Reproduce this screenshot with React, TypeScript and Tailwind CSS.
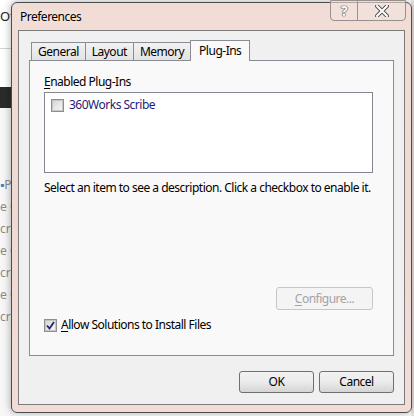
import React from 'react';

const ui = "font-['Segoe_UI','Noto_Sans','Open_Sans',sans-serif]";

function Check({ checked }: { checked?: boolean }) {
  return (
    <span className="flex h-[13px] w-[13px] shrink-0 items-center justify-center border border-[#8f8f8f] bg-white">
      <span className="flex h-[11px] w-[11px] items-center justify-center border border-[#c6c6c6] bg-gradient-to-br from-[#d8d8d8] to-[#f6f6f6]">
        {checked && (
          <svg width="9" height="9" viewBox="0 0 9 9">
            <path d="M1 4.5 L3.5 7.5 L8 1" fill="none" stroke="#23236e" strokeWidth="1.8" />
          </svg>
        )}
      </span>
    </span>
  );
}

function Tab({ label, active }: { label: string; active?: boolean }) {
  if (active) {
    return (
      <div className="relative z-10 -mb-px flex h-[21px] items-center border border-b-0 border-[#898c95] bg-[#f9f9f9] px-[8px] text-[12px] text-black">
        {label}
      </div>
    );
  }
  return (
    <div className="-mr-px flex h-[18px] items-center border border-b-0 border-[#898c95] bg-gradient-to-b from-[#f2f2f2] to-[#e3e3e3] px-[6px] text-[12px] text-black">
      {label}
    </div>
  );
}

function Button({ label, disabled, ul }: { label: string; disabled?: boolean; ul?: boolean }) {
  return (
    <div
      className={
        disabled
          ? 'flex h-[23px] items-center justify-center rounded-[3px] border border-[#c7c7c7] bg-[#f4f4f4] text-[12px] text-[#a3a3a3]'
          : 'flex h-[22px] items-center justify-center rounded-[3px] border border-[#707070] bg-gradient-to-b from-[#f2f2f2] via-[#ebebeb] to-[#d5d5d5] text-[12px] text-black'
      }
    >
      {ul ? (
        <span>
          <span className="underline underline-offset-2">{label[0]}</span>
          {label.slice(1)}
        </span>
      ) : (
        label
      )}
    </div>
  );
}

export default function App() {
  return (
    <div className={`relative h-[416px] w-[414px] overflow-hidden bg-white ${ui}`}>
      {/* window behind the dialog */}
      <div className="absolute left-0 top-0 h-[416px] w-[14px] whitespace-nowrap bg-[#f7f7f7]">
        <div className="h-[49px] border-b border-[#d4d4d4] bg-white pt-[8px] text-[13px] leading-[16px] text-[#222]">Of</div>
        <div className="h-[38px] bg-white" />
        <div className="h-[21px] bg-[#2b2b2b]" />
        <div className="flex flex-col pt-[66px] text-[12px] leading-[22px] text-[#8a8a8a]">
          <span>
            <span className="text-[#3a7fc0]">▪</span>P
          </span>
          <span>
            e <span className="text-[#6a7f99]">C</span>
          </span>
          <span>cri</span>
          <span>
            e <span className="text-[#6a7f99]">C</span>
          </span>
          <span>cri</span>
          <span>
            e <span className="text-[#6a7f99]">C</span>
          </span>
          <span>cri</span>
        </div>
      </div>
      <div className="absolute right-0 top-0 h-[416px] w-[3px] bg-[#efe6e4]" />

      {/* dialog */}
      <div className="absolute left-[11px] top-[2px] flex h-[411px] w-[401px] flex-col rounded-[6px] border border-[#4c4c4c] bg-gradient-to-b from-[#f1dcd6] via-[#efd9d3] to-[#f2dcd7] tracking-[-0.5px] shadow-[0_0_8px_rgba(0,0,0,0.35)]">
        {/* title bar */}
        <div className="relative flex h-[28px] items-center pl-[8px] text-[12px] text-black">
          <span className="[text-shadow:0_0_6px_#fff]">Preferences</span>
          <div className="absolute right-[5px] top-[-3px] flex">
            <div className="flex h-[21px] w-[28px] items-center justify-center rounded-bl-[4px] border border-[#9a8f8d] bg-[#f3e2dd]/60 text-[14px] font-bold text-white [text-shadow:0_0_1px_#444,0_0_1px_#444,0_0_1px_#444]">
              ?
            </div>
            <div className="-ml-px flex h-[21px] w-[49px] items-center justify-center rounded-br-[4px] border border-[#9a8f8d] bg-[#f3e2dd]/60">
              <svg width="14" height="12" viewBox="0 0 14 12">
                <path d="M2 1 L12 11 M12 1 L2 11" stroke="#555" strokeWidth="4" strokeLinecap="round" />
                <path d="M2 1 L12 11 M12 1 L2 11" stroke="#fff" strokeWidth="2" strokeLinecap="round" />
              </svg>
            </div>
          </div>
        </div>

        {/* client area */}
        <div className="mx-[6px] mb-[7px] flex flex-1 flex-col border border-[#7b7b7b] bg-[#f0f0f0] px-[10px] pb-[11px] pt-[9px] text-[12px] text-black">
          <div className="flex items-end pl-[2px]">
            <Tab label="General" />
            <Tab label="Layout" />
            <Tab label="Memory" />
            <Tab label="Plug-Ins" active />
          </div>
          <div className="flex h-[296px] flex-col border border-[#898c95] bg-[#f9f9f9] pl-[14px] pr-[20px] pt-[13px]">
            <div className="leading-[16px]">
              <span className="underline underline-offset-2">E</span>nabled Plug-Ins
            </div>
            <div className="mt-[2px] h-[81px] border border-[#828790] bg-white px-[6px] pt-[5px]">
              <div className="flex items-center gap-[5px]">
                <Check />
                <span className="leading-[14px] text-[#1e1b78]">360Works Scribe</span>
              </div>
            </div>
            <div className="mt-[7px] whitespace-nowrap leading-[16px]">
              Select an item to see a description. Click a checkbox to enable it.
            </div>
            <div className="mt-[91px] flex justify-end">
              <div className="w-[97px]">
                <Button label="Configure..." disabled ul />
              </div>
            </div>
            <div className="mt-[8px] flex items-center gap-[4px]">
              <Check checked />
              <span className="leading-[14px]">
                <span className="underline underline-offset-2">A</span>llow Solutions to Install Files
              </span>
            </div>
          </div>
          <div className="mt-[15px] flex justify-end gap-[5px]">
            <div className="w-[75px]">
              <Button label="OK" />
            </div>
            <div className="w-[75px]">
              <Button label="Cancel" />
            </div>
          </div>
        </div>
      </div>
    </div>
  );
}
